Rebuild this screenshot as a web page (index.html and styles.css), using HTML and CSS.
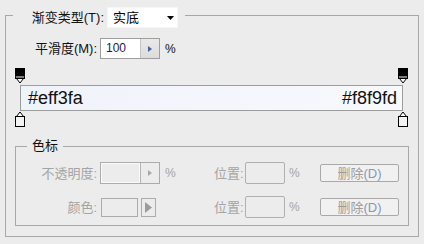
FILE: index.html
```html
<!DOCTYPE html>
<html>
<head>
<meta charset="utf-8">
<link rel="stylesheet" href="styles.css">
</head>
<body>
<div class="page">
  <fieldset class="outer">
    <legend class="outer-legend">
      <div class="legend-row">
        <span class="lbl lbl-type">渐变类型(T):</span>
        <span class="select"><span class="select-val">实底</span><svg class="caret" width="7" height="4" viewBox="0 0 7 4"><path d="M0 0H7L3.5 4Z" fill="#000"/></svg></span>
      </div>
    </legend>
    <div class="smooth-row">
      <span class="lbl lbl-smooth">平滑度(M):</span>
      <span class="spin">
        <span class="spin-val">100</span>
        <span class="spin-btn"><svg width="4" height="6" viewBox="0 0 4 6"><path d="M0 0L4 3L0 6Z" fill="#4762a3"/></svg></span>
      </span>
      <span class="pct">%</span>
    </div>
    <div class="gradient">
      <div class="stops stops-top">
        <span class="stop" style="left:0%"><svg width="10" height="16" viewBox="0 0 10 16"><path d="M1.5 10.5L5 15L8.5 10.5" fill="#fff" stroke="#000"/><rect x="0.5" y="0.5" width="9" height="10" fill="#000" stroke="#000"/><rect x="1" y="8" width="8" height="2" fill="#7a7a7a"/></svg></span>
        <span class="stop" style="left:100%"><svg width="10" height="16" viewBox="0 0 10 16"><path d="M1.5 10.5L5 15L8.5 10.5" fill="#fff" stroke="#000"/><rect x="0.5" y="0.5" width="9" height="10" fill="#000" stroke="#000"/><rect x="1" y="8" width="8" height="2" fill="#7a7a7a"/></svg></span>
      </div>
      <div class="bar">
        <span class="bar-text">#eff3fa</span>
        <span class="bar-text">#f8f9fd</span>
      </div>
      <div class="stops stops-bottom">
        <span class="stop" style="left:0%"><svg width="10" height="16" viewBox="0 0 10 16"><path d="M1.5 5.5L5 1L8.5 5.5" fill="#fff" stroke="#000"/><rect x="0.5" y="5.5" width="9" height="10" fill="#f3f3f3" stroke="#000"/></svg></span>
        <span class="stop" style="left:100%"><svg width="10" height="16" viewBox="0 0 10 16"><path d="M1.5 5.5L5 1L8.5 5.5" fill="#fff" stroke="#000"/><rect x="0.5" y="5.5" width="9" height="10" fill="#f3f3f3" stroke="#000"/></svg></span>
      </div>
    </div>
    <fieldset class="inner">
      <legend class="inner-legend">色标</legend>
      <div class="stop-grid">
        <span class="dlbl dlbl-right">不透明度:</span>
        <span class="dspin">
          <span class="dspin-val"></span>
          <span class="dspin-btn"><svg width="4" height="6" viewBox="0 0 4 6"><path d="M0 0L4 3L0 6Z" fill="#a8a8a8"/></svg></span>
        </span>
        <span class="dpct">%</span>
        <span class="dlbl">位置:</span>
        <span class="dbox"></span>
        <span class="dpct dpct2">%</span>
        <span class="dbtn">删除<span class="mn">(D)</span></span>

        <span class="dlbl dlbl-right">颜色:</span>
        <span class="color-cell">
          <span class="color-box"></span>
          <span class="color-btn"><svg width="7" height="11" viewBox="0 0 7 11"><path d="M0 0L7 5.5L0 11Z" fill="#9c9c9c"/></svg></span>
        </span>
        <span class="dpct"></span>
        <span class="dlbl">位置:</span>
        <span class="dbox"></span>
        <span class="dpct dpct2">%</span>
        <span class="dbtn">删除<span class="mn">(D)</span></span>
      </div>
    </fieldset>
  </fieldset>
</div>
</body>
</html>
```

FILE: styles.css
```css
* { box-sizing: border-box; }

html, body {
  margin: 0;
  background: #ececec;
}

body {
  font-family: "Liberation Sans", "Noto Sans CJK SC", sans-serif;
  font-size: 13px;
  color: #111;
}

.page {
  padding: 7px 0 0 5px;
}

fieldset {
  margin: 0;
  min-width: 0;
}

.outer {
  width: 414px;
  padding: 0 0 10px 0;
  border: 1px solid #a8a8a8;
}

.outer-legend {
  margin-left: 7px;
  padding: 0 7px 0 0;
}

.legend-row {
  display: flex;
  align-items: center;
  height: 21px;
  margin-bottom: -5px;
}

.lbl {
  line-height: 15px;
  text-align: right;
  color: #111;
}

.lbl-type {
  width: 91px;
}

.select {
  margin-left: 3px;
  width: 71px;
  height: 21px;
  background: #fff;
  border: 1px solid #f6f6f6;
  display: flex;
  align-items: center;
  justify-content: space-between;
  padding: 0 3px 0 5px;
}

.select-val {
  line-height: 15px;
  color: #000;
}

.caret {
  display: block;
}

.smooth-row {
  margin-top: 15px;
  display: flex;
  align-items: center;
  height: 21px;
}

.lbl-smooth {
  width: 91px;
}

.spin {
  margin-left: 3px;
  width: 60px;
  height: 21px;
  border: 1px solid #9e9e9e;
  background: #fff;
  display: flex;
}

.spin-val {
  flex: 1;
  padding-left: 5px;
  font-size: 12px;
  line-height: 19px;
  color: #1d1d3c;
}

.spin-btn {
  width: 19px;
  border-left: 1px solid #c4c4c4;
  background: linear-gradient(#e9e9e9, #dcdcdc);
  display: flex;
  align-items: center;
  justify-content: center;
}

.spin-btn svg { display: block; }

.pct {
  margin-left: 5px;
  font-size: 12px;
  line-height: 14px;
  color: #111;
}

.gradient {
  margin: 7px 0 0 14px;
  width: 383px;
}

.stops {
  position: relative;
}

.stops-top { height: 19px; }
.stops-bottom { height: 17px; }

.stop {
  position: absolute;
  width: 10px;
  height: 16px;
  margin-left: -5px;
}

.stop svg { display: block; }

.stops-top .stop { top: 2px; }
.stops-bottom .stop { top: 0; }

.bar {
  height: 26px;
  border: 1px solid #9c9c9c;
  background: linear-gradient(to right, #eff3fa, #f8f9fd);
  display: flex;
  align-items: center;
  justify-content: space-between;
  padding: 0 5px 0 7px;
}

.bar-text {
  font-family: "Liberation Sans", sans-serif;
  font-size: 18px;
  line-height: 20px;
  color: #111;
}

.inner {
  margin: 10px 9px 0 9px;
  padding: 0 0 7px 0;
  border: 1px solid #a8a8a8;
}

.inner-legend {
  margin-left: 11px;
  padding: 0 5px;
  line-height: 16px;
  color: #111;
}

.stop-grid {
  margin-top: 8px;
  display: grid;
  grid-template-columns: 84px 60px 54px 31px 40px 35px 79px;
  grid-auto-rows: 22px;
  row-gap: 12px;
  align-items: center;
}

.dlbl {
  line-height: 15px;
  color: #a4a4a4;
}

.dlbl-right {
  text-align: right;
  padding-right: 3px;
}

.dspin {
  height: 22px;
  border: 1px solid #ababab;
  display: flex;
  background: #ececec;
}

.dspin-val {
  flex: 1;
  border: 1px solid #fafafa;
}

.dspin-btn {
  width: 19px;
  border-left: 1px solid #b4b4b4;
  display: flex;
  align-items: center;
  justify-content: center;
}

.dspin-btn svg { display: block; }

.dpct {
  padding-left: 5px;
  font-size: 12px;
  line-height: 14px;
  color: #a4a4a4;
}

.dpct2 {
  padding-left: 4px;
}

.dbox {
  height: 22px;
  border: 1px solid #b0b0b0;
  border-radius: 2px;
  background: #ececec;
}

.dbtn {
  height: 18px;
  border: 1px solid #a9a9a9;
  border-radius: 2px;
  background: #f1f1f1;
  display: flex;
  align-items: center;
  justify-content: center;
  line-height: 15px;
  color: #9c9c9c;
}

.mn {
  color: #8896b8;
}

.color-cell {
  display: flex;
  align-items: center;
  gap: 3px;
  padding-left: 1px;
}

.color-box {
  width: 37px;
  height: 19px;
  border: 1px solid #ababab;
  background: #ececec;
}

.color-btn {
  width: 15px;
  height: 19px;
  border: 1px solid #ababab;
  background: #ececec;
  display: flex;
  align-items: center;
  justify-content: center;
}

.color-btn svg { display: block; }
```
